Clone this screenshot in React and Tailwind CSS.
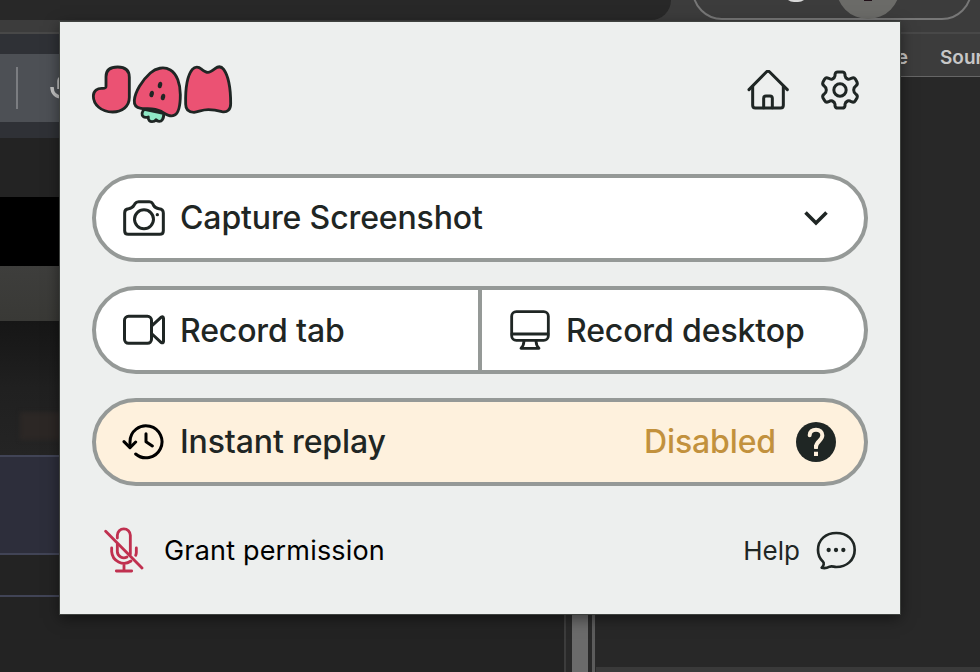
const line = {
  fill: 'none',
  stroke: 'currentColor',
  strokeWidth: 9,
  strokeLinecap: 'round',
  strokeLinejoin: 'round',
};

function Logo() {
  return (
    <svg className="h-[58px] w-[140px]" viewBox="24 30 420 174" overflow="visible" fill="#eb5273" stroke="#1f2624" strokeWidth="8.500" strokeLinejoin="round" strokeLinecap="round">
      <path d="M66 91V62C66 41 80 33 101 33C124 33 136 42 136 64V124C136 152 114 168 86 168C52 168 28 146 28 120C28 104 40 96 56 97C63 97 66 97 66 91Z" />
      <path fill="#8fe8c6" d="M181 160C173 166 172 178 178 182C183 186 189 184 193 183C191 193 198 197 204 197C211 197 214 194 216 191C221 198 231 197 235 191C239 185 240 178 238 172Z" />
      <path d="M151 133C153 108 174 73 199 51C215 37 239 30 259 42C279 54 289 84 289 116C289 145 285 170 272 177C259 184 246 175 231 166C208 153 187 160 171 157C156 155 150 145 151 133Z" />
      <g fill="#1f2624" stroke="none">
        <ellipse cx="228" cy="87" rx="6.5" ry="10" transform="rotate(12 228 87)" />
        <ellipse cx="203" cy="114" rx="6.5" ry="10" transform="rotate(12 203 114)" />
        <ellipse cx="237" cy="123" rx="6.5" ry="10" transform="rotate(12 237 123)" />
      </g>
      <path d="M305 145C304 108 308 61 325 40C333 31 344 32 352 39C360 45 365 49 372 49C379 49 385 44 393 38C402 31 412 31 419 40C435 62 440 106 440 143C440 161 430 170 414 167C399 163 391 161 373 161C354 161 345 167 330 169C313 169 305 161 305 145Z" />
    </svg>
  );
}

function HomeIcon() {
  return (
    <svg className="h-10 w-[42px]" viewBox="36 30 126 120" {...line}>
      <path d="M42 89L94 36Q99 31 104 36L157 89" />
      <path d="M53 79V136Q53 144 61 144H137Q145 144 145 136V79" />
      <path d="M86 143V115Q86 108 93 108H105Q112 108 112 115V143" />
    </svg>
  );
}

function GearIcon() {
  return (
    <svg className="h-10 w-10" viewBox="255 30 120 120" {...line}>
      <circle cx="315" cy="90" r="18.5" />
      <path d="M300 44Q301 36 308 36H322Q329 36 330 44V47Q331 54 338 57Q343 59 349 55Q357 51 361 57L366 66Q369 73 363 77Q356 82 356 90Q356 98 363 103Q369 107 366 114L361 122Q357 129 349 125Q343 121 338 123Q331 126 330 133V137Q329 144 322 144H308Q301 144 300 137V133Q299 126 292 123Q287 121 281 125Q273 129 269 122L264 114Q261 107 267 103Q274 98 274 90Q274 82 267 77Q261 73 264 66L269 57Q273 51 281 55Q287 59 292 57Q299 54 300 47Z" />
    </svg>
  );
}

function CameraIcon() {
  return (
    <svg className="h-[38px] w-11" viewBox="96 87 132 114" {...line}>
      <path d="M104 182V128Q104 117 116 116Q127 115 132 106L135 101Q139 95 146 95H178Q185 95 188 101L191 107Q196 115 207 116Q220 117 220 129V182Q220 193 209 193H115Q104 193 104 182Z" />
      <circle cx="162" cy="148" r="28.5" />
      <circle cx="202" cy="134" r="5" fill="currentColor" stroke="none" />
    </svg>
  );
}

function VideoIcon() {
  return (
    <svg className="h-10 w-11" viewBox="96 90 132 120" {...line}>
      <rect x="103.500" y="109" width="81" height="81" rx="12" />
      <path d="M186 137L213 112Q220 108 220.500 115V184Q220 191 213 187L186 162" />
    </svg>
  );
}

function MonitorIcon() {
  return (
    <svg className="h-10 w-10" viewBox="120 90 120 120" {...line} strokeWidth="8.500">
      <rect x="125" y="95" width="110" height="86" rx="14" />
      <path d="M126 162H234M162 183Q161 198 153 205H207Q199 198 198 183" />
    </svg>
  );
}

function HistoryIcon() {
  return (
    <svg className="h-[38px] w-11 text-black" viewBox="96 83 132 114" {...line}>
      <path d="M120 155V139A48 48 0 1 1 137 176" />
      <path d="M102 139L120 157L137 140M168 115V139L187 152" />
    </svg>
  );
}

function QuestionIcon() {
  return (
    <svg className="h-10 w-10" viewBox="588 81 120 120">
      <circle cx="648" cy="141" r="60" fill="#1f2624" />
      <path d="M629 121C629 110 637 104 648 104C659 104 667 111 667 121C667 137 648 139 648 156" fill="none" stroke="#fef1dd" strokeWidth="12" strokeLinecap="round" />
      <path d="M642 150H654V161H642ZM642 170H654V183H642Z" fill="#fef1dd" />
    </svg>
  );
}

function ChatIcon() {
  return (
    <svg className="h-10 w-10" viewBox="648 408 120 120" {...line} strokeWidth="8">
      <path d="M709 414C741 414 764 434 764 465C764 496 739 516 709 516C701 516 696 512 689 515C681 519 672 520 665 518C671 513 674 504 668 499C659 490 654 479 654 465C654 434 677 414 709 414Z" />
      <g fill="currentColor" stroke="none">
        <circle cx="686" cy="465" r="6.500" />
        <circle cx="708" cy="465" r="6.500" />
        <circle cx="730" cy="465" r="6.500" />
      </g>
    </svg>
  );
}

function MicOffIcon() {
  return (
    <svg className="h-[46px] w-10 text-[#c0304f]" viewBox="42 36 120 138" {...line} strokeWidth="8.500">
      <path d="M47 49L156 159" />
      <path d="M82 69V61A19.500 19.500 0 0 1 121 61V118M82 88V110A19.500 19.500 0 0 0 111 126" />
      <path d="M65 99V110A37 37 0 0 0 123 138M139 99V112Q139 117 137 121M102 147V167M79 168H125" />
    </svg>
  );
}

function Backdrop() {
  return (
    <div className="flex h-full flex-col">
      <div className="flex h-[34px] shrink-0 items-start justify-between overflow-hidden border-b-2 border-[#484848] bg-[#3c3c3c]">
        <div className="h-5 w-[671px] rounded-br-[36px] bg-[#282828]" />
        <div className="mr-2 -mt-10 flex h-[60px] w-[280px] items-end justify-between rounded-full border-2 border-[#777] pl-[90px] pr-[70px]">
          <div className="mb-4 h-5 w-6 rounded-full bg-[#d8d8d8]" />
          <div className="-mb-px flex h-16 w-16 shrink-0 items-end justify-center rounded-full bg-[#6b6b68] pb-[18px]">
            <div className="h-1 w-2 bg-[#201018]" />
          </div>
        </div>
      </div>
      <div className="flex min-h-0 flex-1">
        <div className="flex w-[564px] flex-col bg-[#232323]">
          <div className="h-5 bg-[#2f3136]" />
          <div className="flex h-[68px] items-center bg-[#4d5055]">
            <div className="ml-4 h-[42px] w-0.5 bg-[#7b7d81]" />
            <svg className="ml-8 h-[26px] w-6" viewBox="0 0 24 26" fill="none" stroke="#c4c4c4" strokeWidth="3.500">
              <path d="M2 12C2 18 6 22 12 22M9 14V6A4 4 0 0 1 17 6V14" />
            </svg>
          </div>
          <div className="h-4 bg-[#2f3136]" />
          <div className="h-[59px] bg-[#232323]" />
          <div className="h-[69px] bg-black" />
          <div className="h-[55px] bg-linear-to-b from-[#3e3e3c] to-[#393936]" />
          <div className="flex h-[134px] flex-col items-start bg-linear-to-b from-[#161616] via-[#202020] to-[#242424]">
            <div className="ml-5 mt-[91px] h-7 w-16 bg-[#2c2725] blur-[2px]" />
          </div>
          <div className="h-[100px] border-y-2 border-[#414456] bg-[#2d2e3b]" />
          <div className="h-[42px] border-b-2 border-[#414456]" />
        </div>
        <div className="flex w-8 border-l-2 border-[#3c3c3c] bg-[#292929]">
          <div className="ml-1.5 w-4 bg-[#6b6b6b]" />
          <div className="ml-1 w-[3px] bg-[#5c5c5c]" />
        </div>
        <div className="flex flex-1 flex-col justify-between bg-[#282828]">
          <div className="flex h-[43px] items-center justify-end gap-8 overflow-hidden border-b border-[#666] bg-[#3c3c3c] text-[19px] font-semibold text-[#c7c7c7]">
            <span className="mt-1.5">Console</span>
            <span className="mt-1.5 w-10 whitespace-nowrap">Sources</span>
          </div>
          <div className="h-[5px] bg-[#3a3a3a]" />
        </div>
      </div>
    </div>
  );
}

export default function App() {
  return (
    <div className="relative h-[672px] w-[980px] overflow-hidden bg-[#232323] font-['Inter',sans-serif]">
      <Backdrop />
      <div className="absolute left-[60px] top-[22px] flex h-[592px] w-[840px] flex-col bg-[#edefee] px-8 text-[#1f2624] shadow-[0_0_0_1px_#3f423f,0_4px_14px_rgba(0,0,0,0.5)]">
        <header className="flex h-[152px] items-start justify-between pt-11">
          <Logo />
          <div className="mr-2 mt-1 flex gap-[31px]">
            <HomeIcon />
            <GearIcon />
          </div>
        </header>
        <main className="flex flex-col gap-6 text-[32px] font-medium leading-none tracking-[-0.13px]">
          <button className="flex h-[88px] items-center rounded-full border-4 border-[#959997] bg-white pl-[26px] pr-9">
            <CameraIcon />
            <span className="ml-3.5">Capture Screenshot</span>
            <svg className="ml-auto h-4 w-6" viewBox="0 0 24 16" {...line} strokeWidth="3.600" strokeLinecap="butt" strokeLinejoin="miter">
              <path d="M1.500 2.500L12 13L22.500 2.500" />
            </svg>
          </button>
          <div className="flex h-[88px] overflow-hidden rounded-full border-4 border-[#959997] bg-white">
            <button className="flex w-[386px] items-center border-r-4 border-[#959997] pl-[26px]">
              <VideoIcon />
              <span className="ml-3.5 pt-px">Record tab</span>
            </button>
            <button className="flex flex-1 items-center pl-7">
              <MonitorIcon />
              <span className="ml-4 pt-px">Record desktop</span>
            </button>
          </div>
          <button className="flex h-[88px] items-center rounded-full border-4 border-[#959997] bg-[#fef1dd] pl-[26px] pr-7">
            <HistoryIcon />
            <span className="ml-3.5">Instant replay</span>
            <span className="ml-auto mr-5 text-[#c2913d]">Disabled</span>
            <QuestionIcon />
          </button>
        </main>
        <footer className="flex h-[128px] items-center justify-between pl-3 pr-3 text-[26px]">
          <div className="flex items-center text-black">
            <MicOffIcon />
            <span className="ml-5 pt-0.5 text-[27px] tracking-[0.18px]">Grant permission</span>
          </div>
          <div className="flex items-center pt-0.5">
            <span className="mr-4 pb-0.5">Help</span>
            <ChatIcon />
          </div>
        </footer>
      </div>
    </div>
  );
}
